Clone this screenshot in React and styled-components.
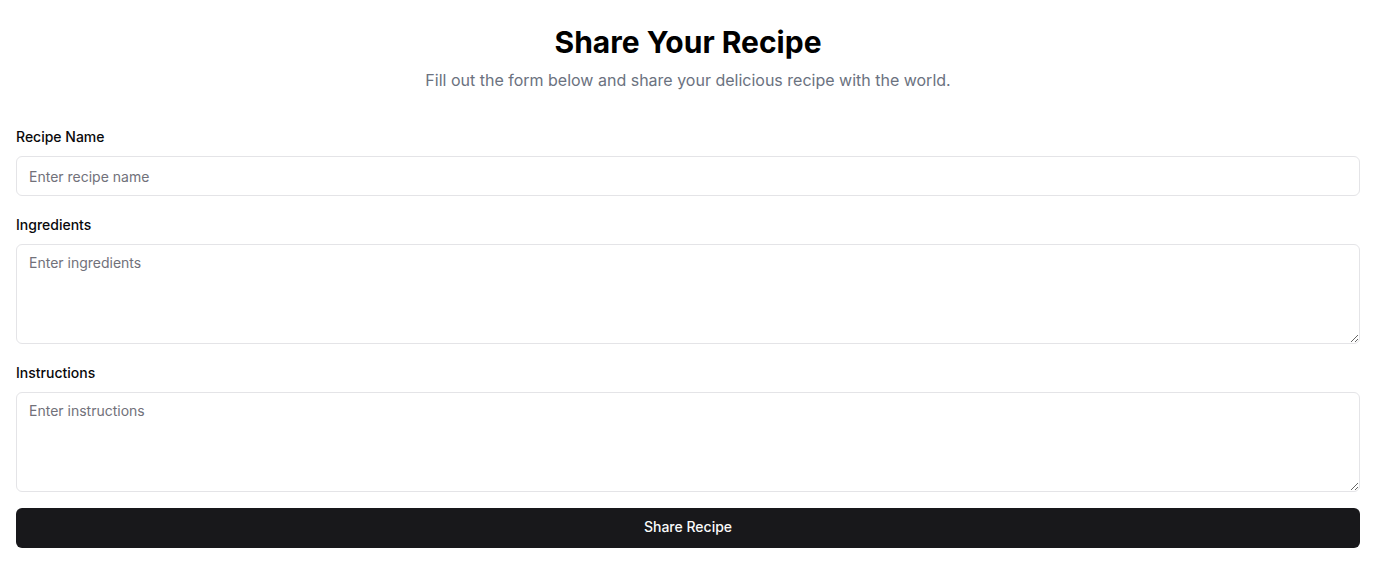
import React from "react";
import styled, { createGlobalStyle } from "styled-components";

const Global = createGlobalStyle`
  html, body { margin: 0; padding: 0; background: #ffffff; }
  body { font-family: Inter, "Noto Sans", sans-serif; color: #09090b; }
  * { box-sizing: border-box; }
`;

const Page = styled.div`
  padding: 24px 16px;
`;

const Header = styled.header`
  text-align: center;
  margin-bottom: 32px;
`;

const Title = styled.h1`
  margin: 0;
  font-size: 30px;
  line-height: 36px;
  font-weight: 700;
  color: #000;
`;

const Subtitle = styled.p`
  margin: 8px 0 0;
  font-size: 16px;
  line-height: 24px;
  color: #6b7280;
`;

const Form = styled.form`
  display: flex;
  flex-direction: column;
  gap: 16px;
`;

const Field = styled.div`
  display: flex;
  flex-direction: column;
  gap: 9px;
`;

const Label = styled.label`
  margin-top: 3px;
  font-size: 14px;
  line-height: 20px;
  font-weight: 500;
  color: #09090b;
`;

const inputBase = `
  width: 100%;
  border: 1px solid #e4e4e7;
  border-radius: 6px;
  padding: 8px 12px;
  font-family: Inter, "Noto Sans", sans-serif;
  font-size: 14px;
  line-height: 20px;
  color: #09090b;
  background: #fff;
  outline: none;
  &::placeholder { color: #71717a; }
`;

const Input = styled.input`
  ${inputBase}
  height: 40px;
`;

const TextArea = styled.textarea`
  ${inputBase}
  height: 100px;
  display: block;
  resize: vertical;
`;

const Button = styled.button`
  height: 40px;
  width: 100%;
  border: none;
  border-radius: 6px;
  padding: 0 16px 2px;
  background: #18181b;
  color: #fafafa;
  font-family: Inter, "Noto Sans", sans-serif;
  font-size: 14px;
  line-height: 20px;
  font-weight: 500;
  cursor: pointer;
`;

export default function App() {
  return (
    <>
      <Global />
      <Page>
        <Header>
          <Title>Share Your Recipe</Title>
          <Subtitle>Fill out the form below and share your delicious recipe with the world.</Subtitle>
        </Header>
        <Form onSubmit={(e) => e.preventDefault()}>
          <Field>
            <Label htmlFor="name">Recipe Name</Label>
            <Input id="name" placeholder="Enter recipe name" />
          </Field>
          <Field>
            <Label htmlFor="ingredients">Ingredients</Label>
            <TextArea id="ingredients" placeholder="Enter ingredients" />
          </Field>
          <Field>
            <Label htmlFor="instructions">Instructions</Label>
            <TextArea id="instructions" placeholder="Enter instructions" />
          </Field>
          <Button type="submit">Share Recipe</Button>
        </Form>
      </Page>
    </>
  );
}
